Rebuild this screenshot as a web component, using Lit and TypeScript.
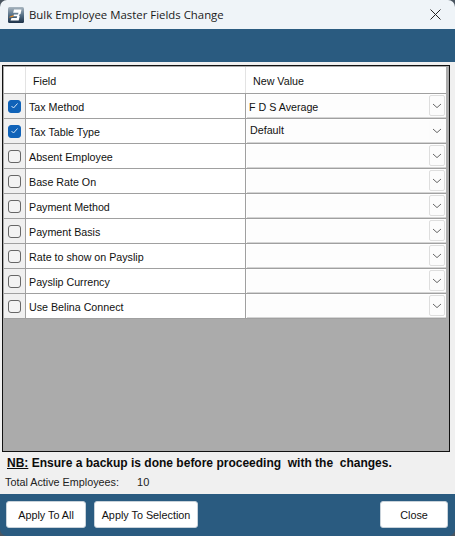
import { LitElement, html, css, svg } from "lit";
import { customElement } from "lit/decorators.js";

const rows = [
  { f: "Tax Method", v: "F D S Average", c: true, flat: false },
  { f: "Tax Table Type", v: "Default", c: true, flat: true },
  { f: "Absent Employee", v: "", c: false, flat: false },
  { f: "Base Rate On", v: "", c: false, flat: false },
  { f: "Payment Method", v: "", c: false, flat: false },
  { f: "Payment Basis", v: "", c: false, flat: false },
  { f: "Rate to show on Payslip", v: "", c: false, flat: false },
  { f: "Payslip Currency", v: "", c: false, flat: false },
  { f: "Use Belina Connect", v: "", c: false, flat: false },
];

const chev = svg`<svg width="10" height="6" viewBox="0 0 10 6"><path d="M1 1l4 3.6L9 1" fill="none" stroke="#666" stroke-width="1"/></svg>`;

@customElement("app-root")
export class AppRoot extends LitElement {
  static styles = css`
    :host { display: block; width: 455px; height: 536px; overflow: hidden; font-family: "Liberation Sans", Arial, sans-serif; font-size: 10.7px; color: #111; background: #4a5560; }
    .win { display: flex; flex-direction: column; height: 536px; border-radius: 7px; overflow: hidden; }
    .title { height: 29px; flex: none; background: #eff4f8; display: flex; align-items: center; padding: 0 14px 0 8px; font-family: "Open Sans", "Liberation Sans", sans-serif; font-size: 11.4px; color: #1a1a1a; }
    .title span { margin-left: 5px; flex: 1; }
    .band { height: 33px; flex: none; background: #2a5b80; }
    .main { flex: 1; display: flex; flex-direction: column; padding: 3px 5px 0 2px; background: #f0f0f0; }
    .grid { height: 387px; flex: none; box-sizing: border-box; border: 1px solid #111; background: #ababab; padding: 1px 3px 0 1px; }
    .head, .row { display: grid; grid-template-columns: 22px 220px 200px; }
    .head { height: 26px; background: #fff; border-bottom: 1px solid #a0a0a0; align-items: center; }
    .head div { height: 100%; display: flex; align-items: center; border-right: 1px solid #e3e3e3; box-sizing: border-box; padding-left: 7px; padding-top: 2px; }
    .head div:last-child { border-right: 0; }
    .row { height: 25px; box-sizing: border-box; border-bottom: 1px solid #a0a0a0; background: #fff; }
    .chk { display: flex; align-items: center; justify-content: center; border-right: 1px solid #a0a0a0; background: #f0f0f0; }
    .box { width: 13px; height: 13px; box-sizing: border-box; border-radius: 3px; border: 1px solid #666; background: #f3f3f3; display: flex; align-items: center; justify-content: center; }
    .box.on { background: #0f62b8; border-color: #0f62b8; }
    .name { display: flex; align-items: center; padding: 2px 0 0 3px; border-right: 1px solid #a0a0a0; }
    .val { position: relative; background: #fdfdfd; margin: 1px 0 0 1px; border-bottom: 1px solid #d5d5d5; display: flex; align-items: center; padding: 2px 0 0 2px; }
    .val.flat { padding: 0 0 3px 3px; }
    .drop { position: absolute; right: 1px; top: 0; bottom: 1px; width: 16px; box-sizing: border-box; background: #fcfcfc; border: 1px solid #dedede; border-radius: 2px; display: flex; align-items: center; justify-content: center; }
    .flat .drop { border-color: transparent; }
    .note { flex: none; height: 23px; display: flex; align-items: center; padding: 0 0 2px 5px; box-sizing: border-box; font-weight: bold; font-size: 12px; white-space: pre; color: #0c0c0c; }
    .total { padding: 1px 0 0 3px; display: flex; font-size: 10.8px; color: #222; }
    .total b { font-weight: normal; margin-left: 18px; font-size: 11px; }
    .foot { height: 42px; flex: none; background: #2a5b80; display: flex; gap: 8px; padding: 7px 7px 8px 6px; box-sizing: border-box; }
    button { font: inherit; font-size: 10.8px; color: #111; background: #fff; border: 1px solid #c8d2da; border-radius: 3px; height: 27px; padding: 0; }
    .a { width: 80px; }
    .b { width: 104px; }
    .c { width: 68px; margin-left: auto; }
  `;

  render() {
    return html`<div class="win">
      <div class="title">
        <svg width="16" height="16" viewBox="0 0 16 16">
          <defs><linearGradient id="g" x1="0" y1="0" x2="0" y2="1"><stop offset="0" stop-color="#a9b6c0"/><stop offset=".55" stop-color="#4f6a82"/><stop offset="1" stop-color="#1e3248"/></linearGradient></defs>
          <rect width="16" height="16" rx="1.5" fill="url(#g)"/>
          <path d="M6 2.5h7.5l-1 4.5-1.8 1 1 1-1 4.5H2.5l1-2.6h5.2l.5-1.6H5.2l.8-1.8h4l.5-1.8H5.2z" fill="#fff"/>
          <path d="M.8 10.5c1.5-1.4 3-1.9 5-1.9l-.7 1.3c-1.6 0-2.8.2-4.3.6z" fill="#e08a2a"/>
        </svg>
        <span>Bulk Employee Master Fields Change</span>
        <svg width="11" height="11" viewBox="0 0 11 11"><path d="M.5.5l10 10M10.5.5l-10 10" stroke="#222" stroke-width="1"/></svg>
      </div>
      <div class="band"></div>
      <div class="main">
        <div class="grid">
          <div class="head"><div></div><div>Field</div><div>New Value</div></div>
          ${rows.map(
            (r) => html`<div class="row">
              <div class="chk">
                <div class="box ${r.c ? "on" : ""}">
                  ${r.c ? svg`<svg width="9" height="8" viewBox="0 0 9 8"><path d="M1.5 4l2 2 4-4.5" fill="none" stroke="#d5e6f7" stroke-width="1"/></svg>` : ""}
                </div>
              </div>
              <div class="name">${r.f}</div>
              <div class="val ${r.flat ? "flat" : ""}">${r.v}<div class="drop">${chev}</div></div>
            </div>`
          )}
        </div>
        <div class="note"><u>NB:</u> Ensure a backup is done before proceeding  with the  changes.</div>
        <div class="total">Total Active Employees:<b>10</b></div>
      </div>
      <div class="foot">
        <button class="a">Apply To All</button>
        <button class="b">Apply To Selection</button>
        <button class="c">Close</button>
      </div>
    </div>`;
  }
}
